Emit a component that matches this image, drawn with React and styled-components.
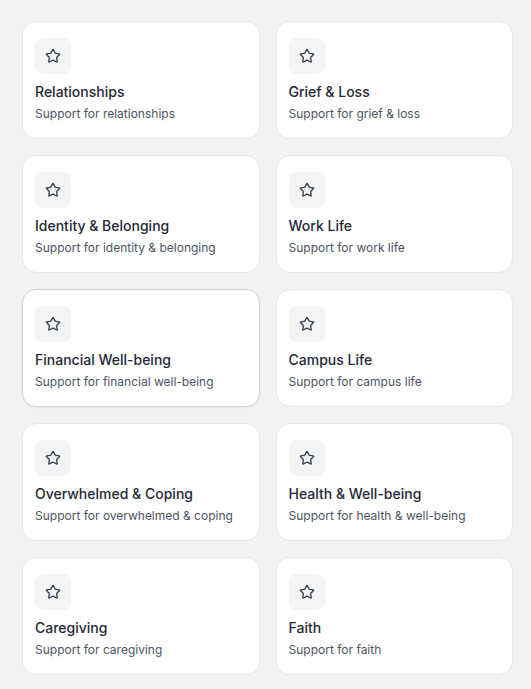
import React from "react";
import styled, { createGlobalStyle } from "styled-components";
import { Star } from "lucide-react";

const GlobalStyle = createGlobalStyle`
  html, body {
    margin: 0;
    padding: 0;
    background: #f2f2f2;
    font-family: Inter, "Noto Sans", sans-serif;
  }
  * { box-sizing: border-box; }
`;

const topics = [
  "Relationships",
  "Grief & Loss",
  "Identity & Belonging",
  "Work Life",
  "Financial Well-being",
  "Campus Life",
  "Overwhelmed & Coping",
  "Health & Well-being",
  "Caregiving",
  "Faith",
];

export default function App() {
  return (
    <>
      <GlobalStyle />
      <Grid>
        {topics.map((t) => (
          <Card key={t} $hovered={t === "Financial Well-being"}>
            <IconBox>
              <Star size={16} strokeWidth={2} color="#374151" />
            </IconBox>
            <Title>{t}</Title>
            <Desc>Support for {t.toLowerCase()}</Desc>
          </Card>
        ))}
      </Grid>
    </>
  );
}

const Grid = styled.div`
  display: grid;
  grid-template-columns: 1fr 1fr;
  gap: 16px;
  padding: 21px 18px 14px 22px;
`;

const Card = styled.div`
  background: #ffffff;
  border: 1px solid ${({ $hovered }) => ($hovered ? "#d1d5db" : "#e5e7eb")};
  border-radius: 14px;
  padding: 16px 12px;
  height: 118px;
  display: flex;
  flex-direction: column;
  box-shadow: ${({ $hovered }) => ($hovered ? "0 1px 2px rgb(0 0 0 / 6%)" : "none")};
`;

const IconBox = styled.div`
  width: 36px;
  height: 36px;
  border-radius: 8px;
  background: #f3f4f6;
  display: flex;
  align-items: center;
  justify-content: center;
  margin-bottom: 8px;
`;

const Title = styled.div`
  font-size: 14px;
  line-height: 20px;
  font-weight: 500;
  color: #1f2937;
`;

const Desc = styled.div`
  margin-top: 4px;
  font-size: 12px;
  line-height: 16px;
  color: #4b5563;
`;
